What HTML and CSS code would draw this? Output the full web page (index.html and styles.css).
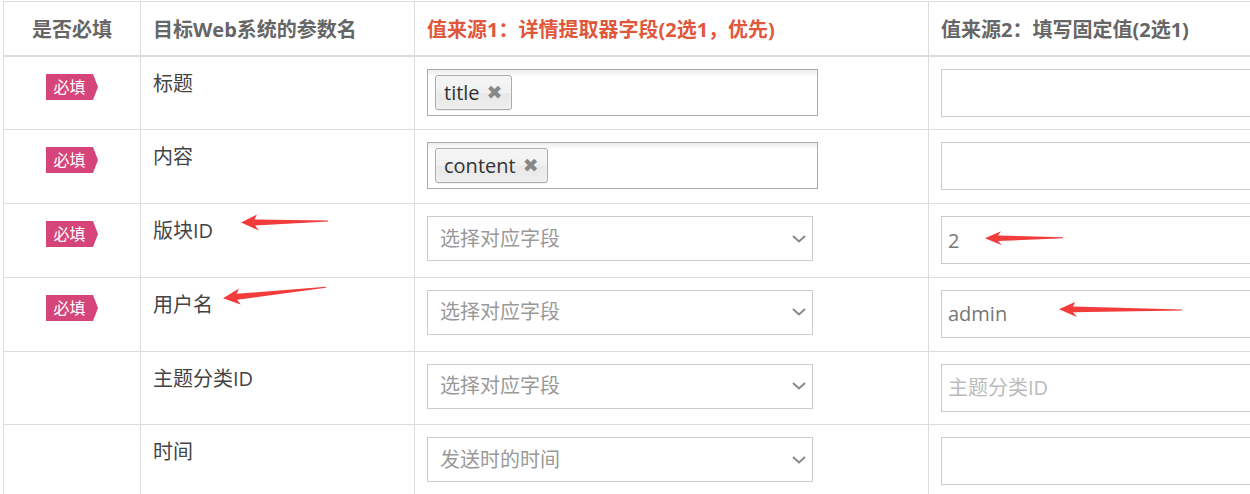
FILE: index.html
```html
<!DOCTYPE html>
<html lang="zh-CN">
<head>
<meta charset="UTF-8">
<meta name="viewport" content="width=device-width, initial-scale=1.0">
<title>参数映射</title>
<link rel="stylesheet" href="styles.css">
</head>
<body>
<div class="sheet">
    <table class="map">
        <colgroup>
            <col class="c-need">
            <col class="c-name">
            <col class="c-src1">
            <col class="c-src2">
        </colgroup>
        <thead>
            <tr>
                <th class="need">是否必填</th>
                <th>目标Web系统的参数名</th>
                <th class="hot">值来源1：详情提取器字段(2选1，优先)</th>
                <th>值来源2：填写固定值(2选1)</th>
            </tr>
        </thead>
        <tbody>
            <tr>
                <td class="need"><span class="must">必填</span></td>
                <td>标题</td>
                <td><div class="chosen"><span class="choice">title<i class="x">✖</i></span></div></td>
                <td><input class="fixed" type="text"></td>
            </tr>
            <tr>
                <td class="need"><span class="must">必填</span></td>
                <td>内容</td>
                <td><div class="chosen"><span class="choice">content<i class="x">✖</i></span></div></td>
                <td><input class="fixed" type="text"></td>
            </tr>
            <tr>
                <td class="need"><span class="must">必填</span></td>
                <td>版块ID</td>
                <td><div class="pick"><span>选择对应字段</span><svg class="chev" width="14" height="8" viewBox="0 0 14 8"><path d="M1 1l6 5.5L13 1" fill="none" stroke="#888" stroke-width="2"/></svg></div></td>
                <td><input class="fixed" type="text" value="2"></td>
            </tr>
            <tr>
                <td class="need"><span class="must">必填</span></td>
                <td>用户名</td>
                <td><div class="pick"><span>选择对应字段</span><svg class="chev" width="14" height="8" viewBox="0 0 14 8"><path d="M1 1l6 5.5L13 1" fill="none" stroke="#888" stroke-width="2"/></svg></div></td>
                <td><input class="fixed" type="text" value="admin"></td>
            </tr>
            <tr>
                <td class="need"></td>
                <td>主题分类ID</td>
                <td><div class="pick"><span>选择对应字段</span><svg class="chev" width="14" height="8" viewBox="0 0 14 8"><path d="M1 1l6 5.5L13 1" fill="none" stroke="#888" stroke-width="2"/></svg></div></td>
                <td><input class="fixed" type="text" placeholder="主题分类ID"></td>
            </tr>
            <tr>
                <td class="need"></td>
                <td>时间</td>
                <td><div class="pick"><span>发送时的时间</span><svg class="chev" width="14" height="8" viewBox="0 0 14 8"><path d="M1 1l6 5.5L13 1" fill="none" stroke="#888" stroke-width="2"/></svg></div></td>
                <td><input class="fixed" type="text"></td>
            </tr>
        </tbody>
    </table>

    <!-- red annotation arrows drawn over the screenshot -->
    <svg class="marks" width="1250" height="494" viewBox="0 0 1250 494">
        <polygon points="241,222.5 257,214.5 254.5,219.5 328,220.6 328,221.4 255,225.5 259,230.5"/>
        <polygon points="223,298.3 239,288.5 236.6,293.8 326,286.8 326,287.8 237.2,299.8 240.7,304.5"/>
        <polygon points="985,238.3 1001,231.3 998,235.5 1063,237.3 1063,238.2 998,241 1002,245.3"/>
        <polygon points="1059,309.3 1075,302 1073,306.5 1182,309.5 1182,310.5 1073,312.3 1077,317"/>
    </svg>
</div>
</body>
</html>
```

FILE: styles.css
```css
body {
    margin: 0;
    padding: 0;
    background-color: #fff;
    font-family: "Open Sans", "Noto Sans CJK SC", sans-serif;
    overflow: hidden;
}

.sheet {
    position: relative;
    width: 1250px;
    height: 494px;
    overflow: hidden;
}

.map {
    border-collapse: collapse;
    table-layout: fixed;
    width: 1325px;
    margin: 1px 0 0 3px;
    font-size: 20px;
    color: #444;
}

.c-need { width: 137px; }
.c-name { width: 274px; }
.c-src1 { width: 514px; }
.c-src2 { width: 400px; }

.map th,
.map td {
    border: 1px solid #ddd;
    padding: 0 12px;
    text-align: left;
}

.map th {
    height: 53px;
    border-bottom: 2px solid #ddd;
    font-weight: bold;
    color: #666;
    white-space: nowrap;
}

.map th.hot {
    color: #e0573c;
}

.map .need {
    text-align: center;
}

.map tbody tr {
    height: 73.8px;
}

.map td {
    vertical-align: top;
    padding-top: 12px;
    line-height: 30px;
}

.must {
    display: inline-block;
    position: relative;
    height: 26px;
    margin: 5px 5px 0 0;
    padding: 0 7px;
    background-color: #d6457a;
    color: #fff;
    font-size: 16px;
    line-height: 26px;
}

.must::after {
    content: "";
    position: absolute;
    left: 100%;
    top: 0;
    border-left: 5px solid #d6457a;
    border-top: 13px solid transparent;
    border-bottom: 13px solid transparent;
}

.chosen {
    box-sizing: border-box;
    width: 391px;
    height: 47px;
    padding: 5px 7px;
    border: 1px solid #aaa;
    background-image: linear-gradient(#eee 1%, #fff 15%);
    display: flex;
}

.choice {
    display: inline-flex;
    align-items: center;
    box-sizing: border-box;
    height: 35px;
    padding: 0 8px;
    border: 1px solid #aaa;
    border-radius: 3px;
    background-image: linear-gradient(#f4f4f4 20%, #f0f0f0 50%, #e8e8e8 52%, #eee 100%);
    box-shadow: 0 0 2px #fff inset, 0 1px 0 rgba(0, 0, 0, 0.05);
    color: #333;
    line-height: 1;
}

.x {
    font-style: normal;
    font-family: "DejaVu Sans", sans-serif;
    font-size: 19px;
    color: #888;
    margin-left: 7px;
}

.pick {
    box-sizing: border-box;
    width: 386px;
    height: 45px;
    padding: 0 6px 0 12px;
    border: 1px solid #ccc;
    display: flex;
    align-items: center;
    justify-content: space-between;
    color: #999;
}

.fixed {
    box-sizing: border-box;
    width: 100%;
    height: 48px;
    margin: 0;
    padding: 0 6px;
    border: 1px solid #ccc;
    font-family: "Open Sans", "Noto Sans CJK SC", sans-serif;
    font-size: 20px;
    color: #777;
    outline: none;
}

.fixed::placeholder {
    color: #bbb;
}

.marks {
    position: absolute;
    left: 0;
    top: 0;
    pointer-events: none;
    fill: #f23b3b;
}
```
